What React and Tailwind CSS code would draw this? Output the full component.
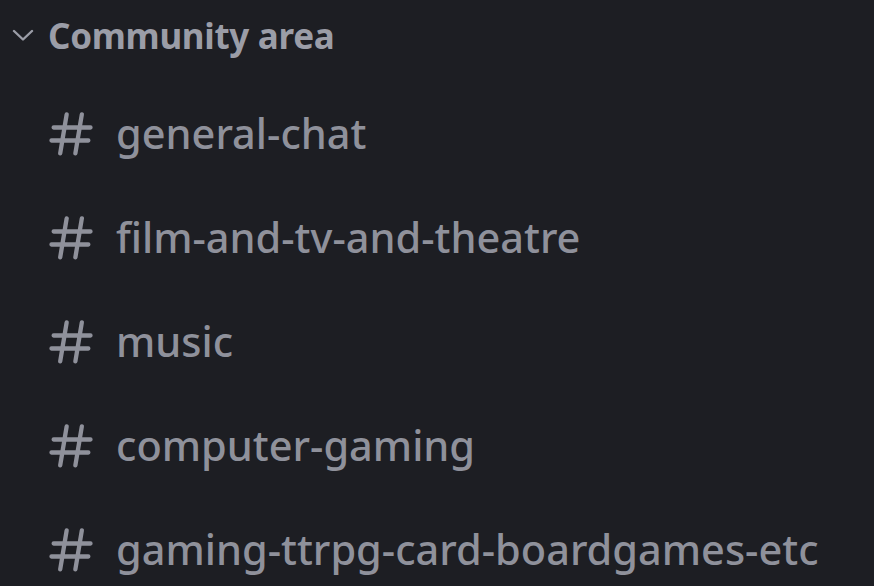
const channels = [
  'general-chat',
  'film-and-tv-and-theatre',
  'music',
  'computer-gaming',
  'gaming-ttrpg-card-boardgames-etc',
];

const HashIcon = () => (
  <svg width="52" height="52" viewBox="0 0 24 24" fill="currentColor" className="shrink-0">
    <path
      fillRule="evenodd"
      d="M10.99 3.16A1 1 0 1 0 9 2.84L8.15 8H4a1 1 0 0 0 0 2h3.82l-.67 4H3a1 1 0 1 0 0 2h3.82l-.8 4.84a1 1 0 0 0 1.97.32L8.85 16h4.97l-.8 4.84a1 1 0 0 0 1.97.32l.86-5.16H20a1 1 0 1 0 0-2h-3.82l.67-4H21a1 1 0 1 0 0-2h-3.82l.8-4.84a1 1 0 1 0-1.97-.32L15.15 8h-4.97l.8-4.84ZM14.15 14l.67-4H9.85l-.67 4h4.97Z"
    />
  </svg>
);

const Chevron = () => (
  <svg width="22" height="12" viewBox="0 0 22 12" fill="none" className="shrink-0">
    <path d="M2 2l9 8.5L20 2" stroke="currentColor" strokeWidth="2.4" strokeLinecap="round" strokeLinejoin="round" />
  </svg>
);

export default function App() {
  return (
    <div
      className="w-[874px] h-[586px] overflow-hidden bg-[#1d1e23]"
      style={{ fontFamily: '"Noto Sans", sans-serif' }}
    >
      <div className="h-[70px] flex items-center pl-[12px] text-[#9b9da7]">
        <Chevron />
        <span className="ml-[14px] text-[35px] font-bold leading-none tracking-[-0.3px]">
          Community area
        </span>
      </div>
      <div className="pt-[12px]">
        {channels.map((name) => (
          <div key={name} className="h-[104px] flex items-center pl-[45px] text-[#8f919b]">
            <HashIcon />
            <span className="ml-[19px] text-[41.5px] font-medium leading-none whitespace-nowrap">
              {name}
            </span>
          </div>
        ))}
      </div>
    </div>
  );
}
